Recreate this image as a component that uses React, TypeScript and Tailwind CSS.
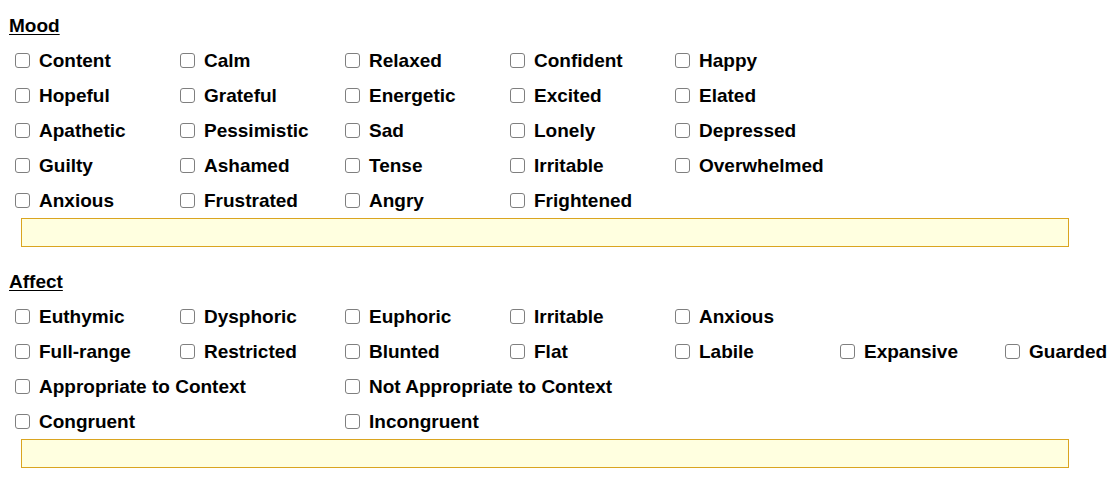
import React from "react";

type Item = { label: string; span?: boolean };

const moodRows: Item[][] = [
  [{ label: "Content" }, { label: "Calm" }, { label: "Relaxed" }, { label: "Confident" }, { label: "Happy" }],
  [{ label: "Hopeful" }, { label: "Grateful" }, { label: "Energetic" }, { label: "Excited" }, { label: "Elated" }],
  [{ label: "Apathetic" }, { label: "Pessimistic" }, { label: "Sad" }, { label: "Lonely" }, { label: "Depressed" }],
  [{ label: "Guilty" }, { label: "Ashamed" }, { label: "Tense" }, { label: "Irritable" }, { label: "Overwhelmed" }],
  [{ label: "Anxious" }, { label: "Frustrated" }, { label: "Angry" }, { label: "Frightened" }],
];

const affectRows: Item[][] = [
  [{ label: "Euthymic" }, { label: "Dysphoric" }, { label: "Euphoric" }, { label: "Irritable" }, { label: "Anxious" }],
  [
    { label: "Full-range" },
    { label: "Restricted" },
    { label: "Blunted" },
    { label: "Flat" },
    { label: "Labile" },
    { label: "Expansive" },
    { label: "Guarded" },
  ],
  [{ label: "Appropriate to Context", span: true }, { label: "Not Appropriate to Context", span: true }],
  [{ label: "Congruent", span: true }, { label: "Incongruent", span: true }],
];

const Check = ({ item }: { item: Item }) => (
  <label className={`flex items-center h-[35px] whitespace-nowrap ${item.span ? "col-span-2" : ""}`}>
    <span className="block mr-[9px] w-[15px] h-[15px] shrink-0 rounded-[3px] border-[1.5px] border-[#7f7f7f] bg-white" />
    <span className="pt-[2px]">{item.label}</span>
  </label>
);

const Section = ({ title, rows }: { title: string; rows: Item[][] }) => (
  <div>
    <div className="h-[35px] flex items-center pl-[9px]">
      <span className="underline underline-offset-2 pt-[2px]">{title}</span>
    </div>
    <div className="pl-[15px]">
      {rows.map((row, i) => (
        <div key={i} className="grid grid-cols-[repeat(6,165px)_auto]">
          {row.map((item) => (
            <Check key={item.label} item={item} />
          ))}
        </div>
      ))}
    </div>
    <input
      type="text"
      className="block ml-[21px] w-[1048px] h-[29px] bg-[#ffffe0] border border-[#daa520] outline-none"
    />
  </div>
);

export default function App() {
  return (
    <div
      className="w-[1117px] h-[483px] overflow-hidden bg-white text-black font-bold text-[19px] pt-[8px]"
      style={{ fontFamily: '"Liberation Sans", Arial, sans-serif' }}
    >
      <Section title="Mood" rows={moodRows} />
      <div className="h-[17px]" />
      <Section title="Affect" rows={affectRows} />
    </div>
  );
}
